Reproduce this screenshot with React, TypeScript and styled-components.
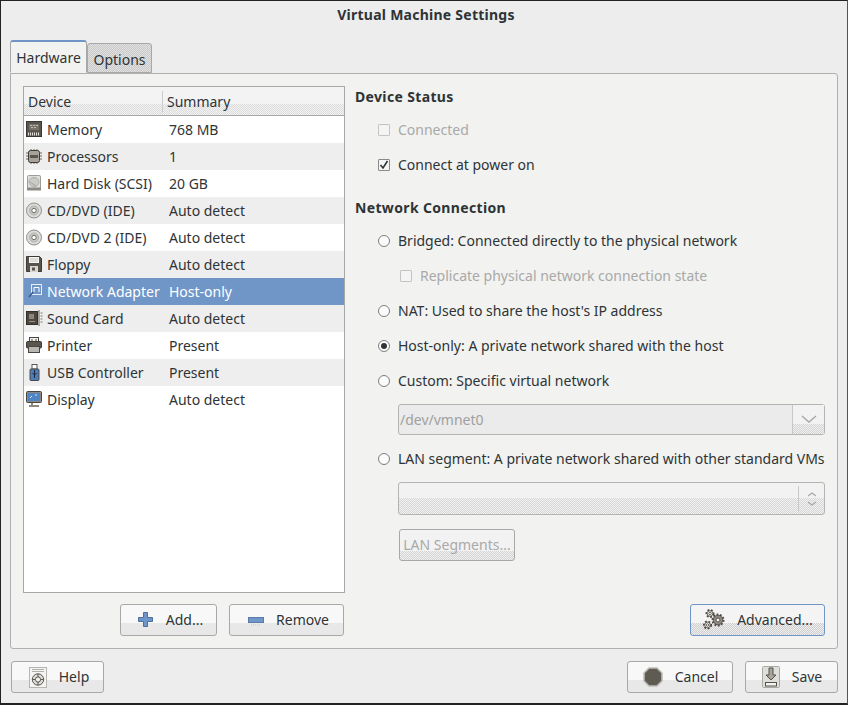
import React from 'react';
import styled, { createGlobalStyle, css } from 'styled-components';

const Global = createGlobalStyle`
  html, body { margin: 0; padding: 0; background: #ededed; }
  body { font-family: "Noto Sans", "Open Sans", sans-serif; font-size: 14px; color: #2e3436; }
`;
const dither = (a: string, b: string) => `repeating-conic-gradient(${a} 0 25%, ${b} 0 50%) 0 0 / 2px 2px`;

const Win = styled.div`
  width: 848px; height: 705px; box-sizing: border-box;
  border: 1px solid #222; border-bottom: 2px solid #222; border-right-color: #555;
  background: #ededed; display: flex; flex-direction: column; overflow: hidden;
`;
const Title = styled.div`
  box-sizing: border-box; height: 28px; padding: 0 0 2px 4px; display: flex; align-items: center; justify-content: center;
  font-weight: 700; font-size: 14px; letter-spacing: 0.25px; color: #2e3436;
`;
const Body = styled.div`
  padding: 12px 9px 0 9px; flex: 1; display: flex; flex-direction: column;
`;
const Tabs = styled.div`display: flex; height: 32px; align-items: flex-end; position: relative; z-index: 1;`;
const Tab = styled.div<{ $active?: boolean }>`
  box-sizing: border-box; display: flex; align-items: center; justify-content: center; border: 1px solid #a8a8a8;
  border-radius: 3px 3px 0 0; font-size: 14px;
  ${p => p.$active ? css`
    height: 33px; width: 77px; background: #f2f2f0; border-top: 2px solid #6f95c8; border-color: #6f95c8 #a8a8a8 transparent #a8a8a8; padding-top: 1px;
  ` : css`
    height: 30px; width: 65px; padding-top: 2px; background: ${dither('#c8c8c8', '#e2e2e2')};
  `}
`;
const Panel = styled.div`
  box-sizing: border-box; height: 576px; border: 1px solid #b0b0b0; border-radius: 0 3px 3px 3px; background: #f2f2f0;
  padding: 12px; display: flex; gap: 10px;
`;
const Left = styled.div`width: 322px; display: flex; flex-direction: column;`;
const Tree = styled.div`
  box-sizing: border-box; height: 507px; border: 1px solid #a8a8a8; background: #fff; display: flex; flex-direction: column;
`;
const Header = styled.div`
  display: grid; grid-template-columns: 138px 1fr; height: 29px; flex: none; box-sizing: border-box;
  border-bottom: 1px solid #a8a8a8; align-items: center; padding-top: 2px;
  background: linear-gradient(#f3f3f3 60%, transparent 60%), ${dither('#dcdcdc', '#f2f2f2')};
`;
const HeadCell = styled.div<{ $sep?: boolean }>`
  padding-left: 4px; font-size: 14px; height: 22px; line-height: 22px; ${p => p.$sep && 'border-left: 1px solid #ccc;'}
`;
const Row = styled.div<{ $alt?: boolean; $sel?: boolean }>`
  display: grid; grid-template-columns: 145px 1fr; height: 27px; align-items: center;
  background: ${p => p.$sel ? '#7096c8' : p.$alt ? '#eeeeee' : '#fff'};
  color: ${p => p.$sel ? '#fff' : '#2e3436'};
`;
const DevCell = styled.div`display: flex; align-items: center; gap: 4px; padding-left: 2px; white-space: nowrap;`;
const IconBox = styled.span`width: 17px; height: 17px; flex: none; display: block; margin-top: -1px; svg { display: block; }`;
const SumCell = styled.div`white-space: nowrap;`;
const LeftBtns = styled.div`display: flex; justify-content: flex-end; gap: 12px; margin-top: 11px; padding-right: 1px;`;
const Btn = styled.div<{ $w: number; $focus?: boolean; $disabled?: boolean; $pl?: number }>`
  box-sizing: border-box; width: ${p => p.$w}px; height: 32px; display: flex; align-items: center; justify-content: center; gap: 12px;
  padding: 0 0 2px ${p => p.$pl ?? 0}px;
  border: 1px solid ${p => p.$focus ? '#6f95c8' : '#a8a8a8'}; border-radius: 3px;
  background: linear-gradient(#f8f8f8 0 60%, #e8e8e8 60% 100%);
  ${p => p.$focus && css`background: linear-gradient(#f4f4f4 60%, transparent 60%), ${dither('#cfcfcf', '#eeeeee')};`}
  ${p => p.$disabled && css`color: #a9a9a9; background: linear-gradient(#f2f2f2 70%, transparent 70%), ${dither('#d4d4d4', '#f0f0f0')};`}
`;
const BtnIcon = styled.span`display: flex; margin-top: 2px;`;
const Right = styled.div`flex: 1; display: flex; flex-direction: column;`;
const Heading = styled.div<{ $mt?: number }>`
  font-weight: 700; font-size: 14px; letter-spacing: 0.35px; height: 22px; line-height: 22px; margin-top: ${p => p.$mt ?? 0}px; margin-bottom: 4px;
`;
const Opt = styled.div<{ $indent?: number; $disabled?: boolean }>`
  height: 35px; display: flex; align-items: center; gap: 8px; padding-left: ${p => p.$indent ?? 23}px;
  color: ${p => p.$disabled ? '#a9a9a9' : '#2e3436'}; white-space: nowrap;
`;
const Check = styled.span<{ $disabled?: boolean }>`
  width: 12px; height: 12px; box-sizing: border-box; border: 1px solid ${p => p.$disabled ? '#c4c4c4' : '#8a8a8a'};
  background: #f4f4f4; border-radius: 1px; flex: none; display: flex; svg { display: block; }
`;
const Radio = styled.span`
  width: 12px; height: 12px; box-sizing: border-box; border: 1px solid #7e7e7e; border-radius: 50%; background: #fbfbfb; flex: none;
  display: flex; align-items: center; justify-content: center;
`;
const Dot = styled.span`width: 6px; height: 6px; border-radius: 50%; background: #2e3436;`;
const Combo = styled.div`
  margin: 6px 0 6px 43px; width: 427px; height: 31px; box-sizing: border-box; border: 1px solid #b4b4b4; border-radius: 3px; display: flex; background: #ebebeb;
  color: #a0a0a0; align-items: stretch;
`;
const ComboText = styled.div`flex: 1; padding-left: 1px; display: flex; align-items: center;`;
const ComboBtn = styled.div`
  width: 31px; border-left: 1px solid #c8c8c8; display: flex; align-items: center; justify-content: center;
  background: linear-gradient(#f2f2f2 65%, transparent 65%), ${dither('#d4d4d4', '#f0f0f0')};
`;
const Spin = styled.div`
  margin: 6px 0 14px 43px; width: 427px; height: 33px; box-sizing: border-box; border: 1px solid #b4b4b4; border-radius: 3px; display: flex; align-items: stretch;
  background: linear-gradient(#f2f2f2 50%, transparent 50%), ${dither('#d6d6d6', '#f2f2f2')};
`;
const SpinBody = styled.div`flex: 1;`;
const SpinBtn = styled.div`
  width: 25px; margin: 3px 0; border-left: 1px solid #c8c8c8; display: flex; align-items: center; justify-content: center;
`;
const SegWrap = styled.div`margin-left: 44px;`;
const Spacer = styled.div`flex: 1;`;
const AdvRow = styled.div`display: flex; justify-content: flex-end;`;
const Footer = styled.div`
  display: flex; align-items: center; justify-content: space-between; margin-top: 12px; padding-left: 1px;
`;
const FootR = styled.div`display: flex; gap: 12px;`;

const I = ({ children }: { children: React.ReactNode }) => <IconBox><svg width="17" height="17" viewBox="0 0 17 17">{children}</svg></IconBox>;

const icons: Record<string, React.ReactNode> = {
  memory: <I><rect x="0.5" y="0.5" width="15" height="15" fill="#5a554d" stroke="#3a3630" /><rect x="3" y="3" width="10" height="6" fill="#77716a" /><path d="M4 4.5h8M5 6.5h6" stroke="#bdb8ae" strokeDasharray="2 1" /><path d="M2 13h12" stroke="#e2e0dc" strokeDasharray="1 1" strokeWidth="3" /></I>,
  cpu: <I><path d="M0 5h16M0 8h16M0 11h16M5 1v15M8 1v15M11 1v15" stroke="#6b655c" /><rect x="2.5" y="2.5" width="11" height="12" rx="2" fill="#a8a39a" stroke="#3e3a34" /><rect x="4" y="7" width="8" height="3" fill="#5a554d" /></I>,
  disk: <I><rect x="1.5" y="0.5" width="13" height="14" rx="1" fill="#dededa" stroke="#9d9d98" /><ellipse cx="8" cy="7" rx="5" ry="4.5" fill="#cbcbc6" stroke="#b0b0ab" /><path d="M4 7l6 4" stroke="#a5a5a0" /><rect x="1" y="12.5" width="14" height="3" fill="#8f8b84" /></I>,
  cd: <I><circle cx="8" cy="8.5" r="7.5" fill="#dcdcda" stroke="#8f8f8c" /><circle cx="8" cy="8.5" r="4.5" fill="#c8c8c5" stroke="#b0b0ad" /><circle cx="8" cy="8.5" r="2.2" fill="#fff" stroke="#6f6d67" /></I>,
  floppy: <I><path d="M.5.5h13l2 2v13H.5z" fill="#57524b" stroke="#3e3a34" /><rect x="3" y="1" width="10" height="6" fill="#f4f4f2" /><path d="M4 3h8M4 5h8" stroke="#c4c4c0" /><rect x="4" y="10" width="8" height="6" fill="#d8d6d2" /><rect x="6" y="11.5" width="3" height="3" fill="#57524b" /></I>,
  net: <I><rect x="5.5" y="1.5" width="10" height="10" fill="#7096c8" stroke="#e8eef6" /><path d="M8 9V4.5h5V9" fill="none" stroke="#fff" /><path d="M7 9l-4 5" stroke="#39577f" strokeWidth="1.3" /></I>,
  sound: <I><rect x="0.5" y="1.5" width="11" height="13" fill="#4c4841" stroke="#33302b" /><rect x="3" y="4" width="5" height="5" fill="#8c867c" /><path d="M3 11.5h6" stroke="#9a958c" /><path d="M13 0v16" stroke="#aaa69e" strokeWidth="2" /><path d="M14.5 3h2M14.5 6h2M14.5 9h2M14.5 12h2" stroke="#7d7870" /></I>,
  printer: <I><rect x="3.5" y="0.5" width="9" height="5" fill="#f0f0ee" stroke="#4a463f" /><path d="M5 3h2M9 3h2" stroke="#4a463f" /><rect x="0.5" y="4.5" width="15" height="6.5" rx="1" fill="#5a554d" stroke="#3e3a34" /><rect x="2.5" y="9.5" width="11" height="6" fill="#b9b7b2" stroke="#4a463f" /></I>,
  usb: <I><rect x="6" y="0.5" width="5" height="4.5" fill="#fff" stroke="#5b5750" /><rect x="4" y="5" width="9" height="11.5" rx="1" fill="#4e7cb8" stroke="#4a4a48" /><path d="M8.5 6v8M6.5 9l2 2 2-2" stroke="#1d2a3a" fill="none" /></I>,
  display: <I><rect x="0.5" y="0.5" width="15" height="11" rx="1" fill="#8d8982" stroke="#4a463f" /><rect x="2" y="2" width="12" height="8" fill="#4f85c2" /><path d="M4 7l2-2M9 4h2" stroke="#d5e3f3" /><path d="M6 12v2M3 15h10" stroke="#8d8982" strokeWidth="2" /></I>,
};

const rows: [string, string, string][] = [
  ['memory', 'Memory', '768 MB'], ['cpu', 'Processors', '1'], ['disk', 'Hard Disk (SCSI)', '20 GB'],
  ['cd', 'CD/DVD (IDE)', 'Auto detect'], ['cd', 'CD/DVD 2 (IDE)', 'Auto detect'], ['floppy', 'Floppy', 'Auto detect'],
  ['net', 'Network Adapter', 'Host-only'], ['sound', 'Sound Card', 'Auto detect'], ['printer', 'Printer', 'Present'],
  ['usb', 'USB Controller', 'Present'], ['display', 'Display', 'Auto detect'],
];

const Tick = () => <svg width="10" height="10" viewBox="0 0 10 10"><path d="M1.5 5l2.5 3 4.5-7" fill="none" stroke="#2e3436" strokeWidth="1.6" /></svg>;
const Plus = () => <svg width="16" height="18" viewBox="0 0 16 18"><path d="M5.5 1.5h4v5h5v4h-5v5h-4v-5h-5v-4h5z" fill="#6f96c9" stroke="#4c6f9e" /></svg>;
const Minus = () => <svg width="16" height="18" viewBox="0 0 16 18"><rect x="0.5" y="6.5" width="15" height="5" fill="#6f96c9" stroke="#5a7aa8" /><path d="M3 14h10" stroke="#c4c4c0" strokeDasharray="1 1" /></svg>;
const Gear = ({ x, y, r, fill }: { x: number; y: number; r: number; fill: string }) => (
  <g transform={`translate(${x} ${y})`}>
    <circle r={r} fill="none" stroke="#4a463f" strokeWidth="2" strokeDasharray="1.8 1.6" />
    <circle r={r - 0.7} fill={fill} stroke="#4a463f" strokeWidth="0.8" />
    <circle r={r * 0.34} fill="#fff" stroke="#4a463f" strokeWidth="0.8" />
  </g>
);
const Gears = () => <svg width="22" height="22" viewBox="0 0 22 22"><Gear x={7} y={4.5} r={3.5} fill="#f0f0ee" /><Gear x={4.5} y={16} r={3.5} fill="#f0f0ee" /><Gear x={15} y={11} r={5.5} fill="#8d8982" /></svg>;
const Stop = () => <svg width="20" height="20" viewBox="0 0 20 20"><path d="M6 1h8l5 5v8l-5 5H6l-5-5V6z" fill="#5f5a52" stroke="#bdbdb8" strokeWidth="1.6" /></svg>;
const SaveI = () => <svg width="18" height="23" viewBox="0 0 18 23"><rect x="0.5" y="0.5" width="17" height="21" rx="1" fill="#dededa" stroke="#a9a9a4" /><path d="M7 2h4v7h3l-5 5-5-5h3z" fill="#a8a59e" stroke="#55504a" /><rect x="3.5" y="16.5" width="11" height="3.5" fill="#f4f4f2" stroke="#55504a" /></svg>;
const HelpI = () => <svg width="18" height="21" viewBox="0 0 18 21"><rect x="0.5" y="0.5" width="17" height="20" fill="#f4f4f2" stroke="#b4b4b0" /><path d="M3 2.5h12M3 4.5h12" stroke="#b0b0ac" /><circle cx="9" cy="12.5" r="5.7" fill="#dcdcd8" stroke="#5c574f" /><circle cx="9" cy="12.5" r="2.6" fill="#f4f4f2" stroke="#5c574f" /><path d="M9 6.8v3.1M9 15.1v3.1M3.3 12.5h3.1M11.6 12.5h3.1" stroke="#5c574f" /></svg>;

export default function App() {
  return (
    <Win>
      <Global />
      <Title>Virtual Machine Settings</Title>
      <Body>
        <Tabs>
          <Tab $active>Hardware</Tab>
          <Tab>Options</Tab>
        </Tabs>
        <Panel>
          <Left>
            <Tree>
              <Header><HeadCell>Device</HeadCell><HeadCell $sep>Summary</HeadCell></Header>
              {rows.map(([ic, name, sum], i) => (
                <Row key={name} $alt={i % 2 === 1} $sel={i === 6}>
                  <DevCell>{icons[ic]}{name}</DevCell>
                  <SumCell>{sum}</SumCell>
                </Row>
              ))}
            </Tree>
            <LeftBtns>
              <Btn $w={97} $pl={4}><BtnIcon><Plus /></BtnIcon>Add...</Btn>
              <Btn $w={115} $pl={4}><BtnIcon><Minus /></BtnIcon>Remove</Btn>
            </LeftBtns>
          </Left>
          <Right>
            <Heading>Device Status</Heading>
            <Opt $disabled><Check $disabled />Connected</Opt>
            <Opt><Check><Tick /></Check>Connect at power on</Opt>
            <Heading $mt={15}>Network Connection</Heading>
            <Opt><Radio />Bridged: Connected directly to the physical network</Opt>
            <Opt $indent={45} $disabled><Check $disabled />Replicate physical network connection state</Opt>
            <Opt><Radio />NAT: Used to share the host's IP address</Opt>
            <Opt><Radio><Dot /></Radio>Host-only: A private network shared with the host</Opt>
            <Opt><Radio />Custom: Specific virtual network</Opt>
            <Combo>
              <ComboText>/dev/vmnet0</ComboText>
              <ComboBtn><svg width="16" height="9" viewBox="0 0 16 9"><path d="M1 1l7 6 7-6" fill="none" stroke="#a8a8a8" strokeWidth="1.4" /></svg></ComboBtn>
            </Combo>
            <Opt><Radio />LAN segment: A private network shared with other standard VMs</Opt>
            <Spin>
              <SpinBody />
              <SpinBtn><svg width="10" height="16" viewBox="0 0 10 16"><path d="M1 5l4-3 4 3M1 11l4 3 4-3" fill="none" stroke="#a8a8a8" strokeWidth="1.2" /></svg></SpinBtn>
            </Spin>
            <SegWrap><Btn $w={116} $disabled>LAN Segments...</Btn></SegWrap>
            <Spacer />
            <AdvRow><Btn $w={135} $focus $pl={1}><BtnIcon><Gears /></BtnIcon>Advanced...</Btn></AdvRow>
          </Right>
        </Panel>
        <Footer>
          <Btn $w={93} $pl={3}><BtnIcon><HelpI /></BtnIcon>Help</Btn>
          <FootR>
            <Btn $w={106} $pl={1}><BtnIcon><Stop /></BtnIcon>Cancel</Btn>
            <Btn $w={93} $pl={1}><BtnIcon><SaveI /></BtnIcon>Save</Btn>
          </FootR>
        </Footer>
      </Body>
    </Win>
  );
}
